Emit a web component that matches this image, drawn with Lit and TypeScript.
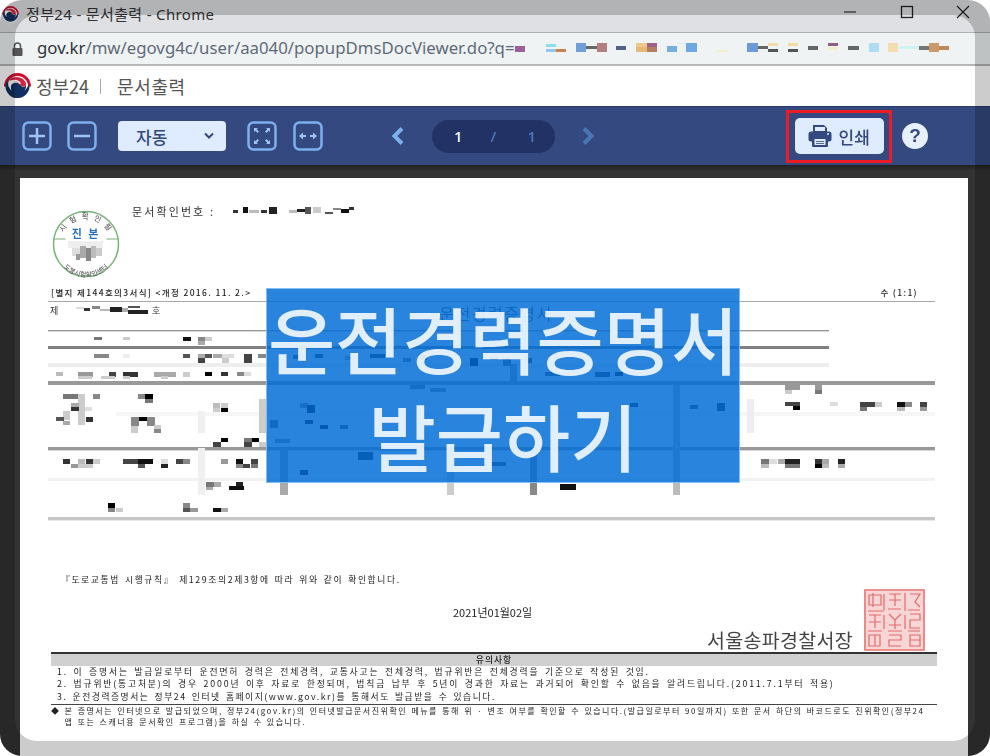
import { LitElement, html, css, svg } from "lit";
import { customElement } from "lit/decorators.js";

type R = [number, number, number, number, string];

const chips: R[] = [
  [515,46,10,6,"#9c5f9c"],[546,44,10,3,"#8edcf0"],[546,49,10,3,"#8cc8f0"],[556,49,10,3,"#c8824a"],
  [576,43,10,9,"#6e9fd8"],[586,46,11,3,"#666"],[597,43,10,9,"#b57f7f"],[616,46,10,4,"#55608a"],
  [636,43,11,4,"#edc98a"],[636,47,11,5,"#e8b878"],[647,43,10,4,"#a0608a"],[647,47,10,5,"#b08060"],
  [667,46,10,6,"#78aee0"],[677,43,10,1,"#cdf3f2"],[686,43,11,9,"#6ea8e0"],[717,50,10,2,"#f5f0c0"],
  [747,43,11,9,"#6e9ad6"],[758,46,10,3,"#666"],[768,43,10,3,"#f0dca8"],[768,49,10,3,"#555"],
  [788,43,10,3,"#f0dca0"],[788,49,10,3,"#555"],[808,46,10,4,"#666"],[828,43,10,3,"#905f85"],
  [828,47,10,3,"#f3f0c8"],[848,46,11,4,"#666"],[869,43,10,9,"#aedcf5"],[888,43,10,9,"#f2ddb0"],
  [899,46,20,3,"#cdf3f2"],[919,46,10,4,"#777"],[929,43,10,9,"#c99a6c"],[939,46,10,4,"#c08858"],
];

const lines: R[] = [
  [48,301,887,1,"#a8a8a8"],[48,330,781,1.4,"#999"],[48,346,781,3,"#808080"],[48,363,781,4,"#eee"],
  [48,381,887,4,"#999"],[48,447,887,3.4,"#999"],[48,478,887,3,"#f2f2f2"],[48,517,887,3.4,"#c6c6c6"],
  [116,412,819,4,"#f6f6f6"],
  [198,411,7,22,"#f0f0f0"],[198,448,7,47,"#f0f0f0"],[747,399,7,34,"#eee"],
  [280,448,8,47,"#aaa"],[447,448,7,47,"#ccc"],[530,448,7,47,"#888"],[673,385,7,110,"#bbb"],
  [259,399,7,34,"#ccc"],[510,364,7,21,"#999"],
];

const mosaic: R[] = [
  [94,354,15,4,"#888"],[123,354,7,4,"#eee"],[183,354,7,4,"#555"],[198,354,7,4,"#aaa"],[205,354,7,4,"#555"],
  [213,354,10,4,"#aaa"],[222,354,12,4,"#ddd"],[244,354,8,9,"#444"],[258,354,8,4,"#888"],[198,358,7,5,"#444"],
  [222,358,7,5,"#ccc"],
  [94,337,8,3,"#777"],[123,337,7,3,"#ccc"],[183,337,8,4,"#111"],[198,337,7,4,"#888"],[205,337,7,4,"#ccc"],[198,341,7,4,"#aaa"],
  [56,372,7,4,"#bbb"],[78,372,15,5,"#999"],[109,372,7,5,"#444"],[123,372,15,5,"#333"],[154,372,22,5,"#aaa"],
  [183,372,7,5,"#ccc"],[205,372,7,4,"#000"],[221,372,7,4,"#333"],[237,372,7,4,"#888"],[244,372,7,4,"#ddd"],
  [78,376,14,3,"#ccc"],[101,376,14,3,"#ccc"],[123,376,7,3,"#ccc"],[161,376,7,3,"#ccc"],
  [63,394,15,5,"#777"],[78,394,7,31,"#ccc"],[93,394,7,5,"#888"],[138,394,7,5,"#888"],[145,394,8,5,"#000"],
  [145,399,8,4,"#777"],[71,403,8,4,"#aaa"],[71,407,8,4,"#333"],[85,407,7,4,"#ddd"],[63,411,7,9,"#ccc"],
  [56,417,8,4,"#555"],[86,417,7,5,"#333"],[63,421,7,4,"#aaa"],[131,417,8,9,"#888"],[139,417,8,4,"#000"],
  [147,417,8,9,"#888"],[131,426,7,7,"#ccc"],[154,425,7,4,"#ccc"],[154,429,7,4,"#888"],
  [213,403,7,5,"#bbb"],[221,403,7,5,"#ccc"],[213,408,7,4,"#ccc"],[221,408,7,4,"#000"],
  [221,438,7,4,"#000"],[213,442,8,5,"#444"],[244,438,8,5,"#777"],[252,438,7,4,"#000"],[244,442,8,5,"#444"],[259,442,7,5,"#ccc"],
  [63,459,7,5,"#333"],[71,464,7,4,"#999"],[78,459,7,5,"#bbb"],[78,464,15,4,"#ccc"],[86,459,7,5,"#333"],
  [93,459,7,5,"#ccc"],[123,459,22,5,"#444"],[138,459,15,5,"#111"],[138,464,7,4,"#555"],[161,459,7,5,"#ddd"],
  [161,464,7,4,"#222"],[176,459,7,5,"#444"],[183,459,7,5,"#888"],[221,459,7,5,"#999"],[236,459,7,5,"#111"],
  [236,464,7,4,"#888"],[243,464,7,4,"#444"],[251,459,7,5,"#444"],[251,464,7,4,"#777"],
  [206,482,8,5,"#777"],[214,482,7,5,"#aaa"],[206,487,7,3,"#aaa"],[229,486,15,4,"#111"],[236,482,7,4,"#222"],
  [108,503,7,5,"#000"],[108,508,7,4,"#888"],[116,508,7,4,"#ccc"],[183,503,7,5,"#888"],[183,508,7,4,"#555"],
  [190,508,8,4,"#999"],[213,508,8,4,"#111"],[221,508,7,4,"#aaa"],
  [293,355,8,4,"#555"],[315,354,8,4,"#333"],[345,356,8,4,"#999"],[370,354,15,4,"#333"],[403,358,8,4,"#777"],
  [420,355,7,5,"#222"],[470,358,8,8,"#000"],[490,356,8,4,"#333"],[503,358,8,8,"#666"],[525,358,7,5,"#333"],
  [550,354,8,4,"#aaa"],[545,372,15,4,"#555"],[595,372,15,5,"#333"],[615,372,8,4,"#000"],[410,385,15,4,"#777"],
  [430,388,16,4,"#888"],[300,403,8,5,"#888"],[307,405,8,8,"#000"],[630,403,8,4,"#222"],[690,405,8,4,"#444"],
  [717,403,8,8,"#222"],[270,420,8,8,"#666"],[305,420,8,4,"#000"],[320,425,8,4,"#000"],[340,425,8,4,"#555"],
  [275,439,15,4,"#888"],[358,452,15,8,"#222"],[490,462,16,4,"#444"],[300,470,8,5,"#000"],[560,484,16,6,"#111"],
  [785,385,15,5,"#999"],[785,390,7,4,"#ccc"],[815,385,7,5,"#999"],[815,390,7,4,"#777"],
  [785,402,15,4,"#444"],[793,406,7,4,"#000"],[830,402,8,4,"#ddd"],[860,402,15,5,"#444"],[860,407,7,4,"#777"],
  [875,402,7,5,"#ccc"],[897,402,8,5,"#111"],[905,402,7,5,"#888"],[897,407,8,4,"#bbb"],[920,402,7,5,"#444"],[920,407,7,4,"#999"],
  [761,459,8,5,"#777"],[769,459,8,5,"#ddd"],[778,459,7,5,"#aaa"],[785,459,15,5,"#222"],[785,464,15,4,"#777"],
  [761,464,8,4,"#bbb"],[815,459,7,5,"#333"],[815,464,7,4,"#000"],[822,459,7,5,"#aaa"],[822,464,7,4,"#bbb"],
  [838,459,7,5,"#222"],[838,464,7,4,"#aaa"],
];

const caseNo: R[] = [[76,307,8,2,"#ddd"],[84,308,6,3,"#333"],[92,306,8,3,"#888"],[100,309,10,2,"#bbb"],[110,307,12,5,"#222"],[122,308,6,4,"#aaa"],[128,306,12,2,"#555"],[128,310,20,4,"#222"]];

const docNo: R[] = [[0,3,5,3,"#333"],[10,0,5,6,"#111"],[16,3,10,3,"#bbb"],[28,3,6,3,"#333"],[36,0,8,7,"#222"],[56,3,8,3,"#bbb"],[64,2,8,3,"#222"],[72,0,6,7,"#555"],[80,0,8,6,"#ccc"],[92,5,8,2,"#555"],[100,1,8,2,"#888"],[108,2,8,4,"#111"],[116,0,5,3,"#333"]];

const stampPix: R[] = [[16,31,35,7,"#eee"],[20,38,8,8,"#ddd"],[28,36,6,12,"#aaa"],[34,38,5,13,"#888"],[39,36,5,12,"#bbb"],[44,38,6,8,"#ccc"],[24,44,4,6,"#999"]];

const rects = (list: R[]) => list.map(([x, y, w, h, c]) => svg`<rect x=${x} y=${y} width=${w} height=${h} fill=${c}></rect>`);

const emblem = (s: number) => html`<svg width=${s} height=${s} viewBox="0 0 28 28">
  <circle cx="14" cy="14" r="13.500" fill="#fff"></circle>
  <path d="M1.500 14A12.500 12.500 0 0 1 26.500 14" fill="none" stroke="#c8102e" stroke-width="3"></path>
  <path d="M26.500 13A12.500 12.500 0 0 1 1.500 14C1.500 11 3 9 5 7.500 3.500 12 5 15 5.500 15 7 21 21 24 25 13Z" fill="#12305f"></path>
  <path d="M7.500 12.500C10 9 14.500 9 16.500 12c2 3 5 3.500 6.500 .5C23 18 19 23.500 14 23.500 9.500 23.500 6 18.500 7.500 12.500Z" fill="#12305f"></path>
  <path d="M5 7.500C9 3.500 16 3 20.500 7c1.500 1.500 2.500 3.500 2.500 5.500C21 15 18.500 14.500 16.500 12 14 8.500 9 8 5 7.500Z" fill="#c8102e" opacity="0.9"></path>
  <path d="M7.500 8.500C11 7 15 8 17 11" fill="none" stroke="#fff" stroke-width="1.500"></path>
</svg>`;

@customElement("app-root")
export class AppRoot extends LitElement {
  static styles = css`
    :host { display: block; position: relative; width: 990px; height: 756px; overflow: hidden; border-radius: 22px; font-family: "Noto Sans CJK KR", "Noto Sans", sans-serif; background: #fff; }
    svg { display: block; flex: none; }
    .win { display: flex; flex-direction: column; height: 756px; filter: blur(0.45px); }
    .title { height: 32px; background: #dfe0e3; display: flex; align-items: center; padding: 0 20px 4px 2px; color: #333; font-size: 15px; gap: 7px; box-sizing: border-box; overflow: hidden; }
    .title span { white-space: pre; letter-spacing: 0.35px; line-height: 20px; margin-top: -1px; font-family: "Noto Sans", "Noto Sans CJK KR", sans-serif; }
    .ctl { display: flex; gap: 42.500px; margin-left: auto; align-items: center; margin-top: -4px; }
    .addr { height: 34px; box-sizing: border-box; background: #eff3f4; border-top: 1px solid #aeb0b2; border-bottom: 2px solid #b4b6b8; display: flex; align-items: center; padding-left: 12px; gap: 14px; position: relative; }
    .url { font-family: "Noto Sans", sans-serif; font-size: 16.800px; color: #5f6a78; white-space: nowrap; line-height: 20px; padding-bottom: 1px; }
    .url b { font-weight: 400; color: #30343a; }
    .chips { position: absolute; left: 0; top: -33px; }
    .head { height: 40px; background: #fff; display: flex; align-items: center; padding-left: 4px; color: #555; font-size: 18px; box-sizing: border-box; }
    .head .org { margin-left: 5px; }
    .head .sep { width: 1px; height: 15px; background: #aaa; margin: 0 16px 0 11px; }
    .head .sub { letter-spacing: 0.6px; }
    .bar { height: 59px; background: #34497f; border-top: 1px solid #28396a; box-sizing: border-box; display: flex; align-items: center; padding-left: 22px; }
    .ic { margin-right: 15px; }
    .ic2 { margin-right: 16px; }
    .sel { width: 108px; height: 30px; background: #dfecff; border-radius: 4px; margin: 0 21px 0 6px; display: flex; align-items: center; justify-content: space-between; padding: 0 11px 0 18px; box-sizing: border-box; color: #34497f; font-size: 17px; font-weight: 500; }
    .prev { margin: 0 27px 0 67px; }
    .pill { width: 123px; height: 33px; border-radius: 17px; background: #233265; display: flex; align-items: center; font-family: "Noto Sans", sans-serif; font-size: 15px; font-weight: 500; padding-left: 22px; box-sizing: border-box; color: #fff; }
    .pill i { font-style: normal; color: #4a7cc0; }
    .pill .sl { margin-left: 28px; }
    .pill .tot { margin-left: 31px; }
    .next { margin: 0 190px 0 26px; }
    .redbox { width: 106px; height: 53px; border: 3px solid #ed1c24; box-sizing: border-box; display: flex; align-items: center; justify-content: center; margin-right: 10px; }
    .print { width: 89px; height: 36px; background: #dfecff; border-radius: 5px; display: flex; align-items: center; gap: 7px; padding-left: 13px; box-sizing: border-box; color: #34497f; font-size: 17px; font-weight: 500; }
    .help { width: 26px; height: 26px; border-radius: 50%; background: #e6f0ff; color: #34497f; font-family: "Liberation Sans", sans-serif; font-weight: 700; font-size: 19px; display: flex; align-items: center; justify-content: center; }
    .view { flex: 1; min-height: 0; background: linear-gradient(#222, #333 6px); padding: 13px 22px 0 20px; }
    .page { height: 600px; background: #fff; padding: 0 32px 0 28px; box-sizing: border-box; color: #222; overflow: hidden; }
    .toprow { height: 105px; display: flex; padding-left: 4px; gap: 12px; box-sizing: border-box; padding-top: 32px; }
    .docno { display: flex; align-items: center; gap: 18px; height: 12px; margin-top: -5px; font-size: 11px; letter-spacing: 2.100px; color: #333; }
    .formhead { height: 17px; display: flex; justify-content: space-between; align-items: flex-end; font-size: 8.500px; padding: 0 18px 2px 3px; box-sizing: border-box; letter-spacing: 1.370px; line-height: 12px; font-weight: 500; }
    .conf { margin-top: 51px; height: 14px; line-height: 14px; padding-left: 13px; font-size: 8.800px; letter-spacing: 1.600px; word-spacing: 1.500px; white-space: nowrap; }
    .sign { height: 65px; display: flex; padding-left: 405px; }
    .date { margin-top: 18px; font-size: 11px; line-height: 14px; height: 14px; }
    .name { margin-left: auto; align-self: flex-end; font-size: 19.500px; color: #444; line-height: 24px; letter-spacing: 0.3px; }
    .seal { margin: 2px 11px 0 11px; }
    .notice { margin: 0 -1px 0 3px; border-top: 2px solid #333; font-size: 8.800px; color: #222; white-space: nowrap; }
    .band { height: 12px; line-height: 12px; background: #d0d0d0; text-align: center; font-weight: 500; letter-spacing: 1px; }
    .items { padding: 0 0 1px 6px; line-height: 12.300px; letter-spacing: 1.830px; word-spacing: 1.800px; border-bottom: 1px solid #444; }
    .l3 { letter-spacing: 1.500px; }
    .foot { display: flex; gap: 4px; font-size: 8px; line-height: 11px; letter-spacing: 1.490px; word-spacing: 1px; }
    .scan { position: absolute; left: 266px; top: 288px; width: 474px; height: 195px; box-sizing: border-box; border: 1px solid rgba(140, 195, 250, 0.9); background: rgba(0, 108, 216, 0.84); display: flex; flex-direction: column; align-items: center; justify-content: center; color: rgba(255, 255, 255, 0.86); font-size: 73px; font-weight: 500; line-height: 97px; white-space: nowrap; filter: blur(0.4px); }
    .frame { position: absolute; left: 15px; top: 15px; width: 960px; height: 726px; border-radius: 22px; box-shadow: 0 0 0 60px rgba(0, 0, 0, 0.2); }
  `;

  render() {
    return html`
      <div class="win">
        <div class="title">
          ${emblem(17)}
          <span>정부24 - 문서출력 - Chrome</span>
          <div class="ctl">
            <svg width="14" height="14" viewBox="0 0 14 14"><path d="M1 7h12" stroke="#333" stroke-width="1.2"></path></svg>
            <svg width="14" height="14" viewBox="0 0 14 14"><rect x="1.500" y="1.500" width="11" height="11" fill="none" stroke="#222" stroke-width="1.300"></rect></svg>
            <svg width="14" height="14" viewBox="0 0 14 14"><path d="M1 1l12 12M13 1L1 13" stroke="#222" stroke-width="1.200"></path></svg>
          </div>
        </div>
        <div class="addr">
          <svg width="11" height="14" viewBox="0 0 11 14"><path d="M2.500 6V4a3 3 0 0 1 6 0v2" fill="none" stroke="#555" stroke-width="1.500"></path><rect x="0.500" y="6" width="10" height="8" rx="1" fill="#555"></rect></svg>
          <div class="url"><b>gov.kr</b>/mw/egovg4c/user/aa040/popupDmsDocViewer.do?q=</div>
          <svg class="chips" width="990" height="66" viewBox="0 0 990 66">${rects(chips)}</svg>
        </div>
        <div class="head">
          ${emblem(27)}
          <span class="org">정부24</span><span class="sep"></span><span class="sub">문서출력</span>
        </div>
        <div class="bar">
          <svg class="ic" width="30" height="30" viewBox="0 0 30 30"><rect x="1.500" y="1.500" width="27" height="27" rx="5" fill="none" stroke="#7db0ee" stroke-width="2.500"></rect><path d="M7 15h16M15 7v16" stroke="#9cc4f4" stroke-width="2.500"></path></svg>
          <svg class="ic" width="30" height="30" viewBox="0 0 30 30"><rect x="1.500" y="1.500" width="27" height="27" rx="5" fill="none" stroke="#7db0ee" stroke-width="2.500"></rect><path d="M7 15h16" stroke="#9cc4f4" stroke-width="2.500"></path></svg>
          <div class="sel"><span>자동</span>
            <svg width="12" height="8" viewBox="0 0 12 8"><path d="M2 1.500l4 4 4-4" fill="none" stroke="#34497f" stroke-width="2"></path></svg>
          </div>
          <svg class="ic2" width="30" height="30" viewBox="0 0 30 30"><rect x="1.500" y="1.500" width="27" height="27" rx="5" fill="none" stroke="#7db0ee" stroke-width="2.500"></rect><path d="M7 11V7h4l-1.300 1.300 2.200 2.200-1.400 1.400-2.200-2.200ZM23 11V7h-4l1.300 1.300-2.200 2.200 1.400 1.400 2.200-2.200ZM7 19v4h4l-1.300-1.300 2.200-2.200-1.400-1.400-2.200 2.200ZM23 19v4h-4l1.300-1.300-2.200-2.200 1.400-1.400 2.200 2.200Z" fill="#9cc4f4"></path></svg>
          <svg width="30" height="30" viewBox="0 0 30 30"><rect x="1.500" y="1.500" width="27" height="27" rx="5" fill="none" stroke="#7db0ee" stroke-width="2.500"></rect><path d="M6 15l4-3.500v2.500h3v2h-3v2.500ZM24 15l-4-3.500v2.500h-3v2h3v2.500Z" fill="#9cc4f4"></path></svg>
          <svg class="prev" width="15" height="20" viewBox="0 0 15 20"><path d="M12 2.500L4.500 10l7.500 7.500" fill="none" stroke="#7db0ee" stroke-width="4"></path></svg>
          <div class="pill"><span>1</span><i class="sl">/</i><i class="tot">1</i></div>
          <svg class="next" width="15" height="20" viewBox="0 0 15 20"><path d="M3 2.500L10.500 10 3 17.500" fill="none" stroke="#4a76b8" stroke-width="4"></path></svg>
          <div class="redbox">
            <div class="print">
              <svg width="24" height="24" viewBox="0 0 24 24"><path d="M5 1h11l3 3v4H5Z" fill="#34497f"></path><rect x="7" y="3" width="10" height="4" fill="#dfecff"></rect><rect x="0.500" y="7.500" width="23" height="10" rx="2.500" fill="#34497f"></rect><rect x="4" y="13" width="16" height="10" rx="1" fill="#34497f"></rect><rect x="6.500" y="15" width="11" height="6" fill="#dfecff"></rect><path d="M8 17.500h8M8 19.500h8" stroke="#34497f" stroke-width="0.800"></path><circle cx="20" cy="10" r="1" fill="#dfecff"></circle></svg>
              <span>인쇄</span>
            </div>
          </div>
          <div class="help">?</div>
        </div>
        <div class="view">
          <div class="page">
            <div class="toprow">
              <svg width="68" height="68" viewBox="0 0 68 68">
                <defs>
                  <path id="ta" d="M9 34A25 25 0 0 1 59 34"></path>
                  <path id="tb" d="M3 36A31 31 0 0 0 65 36"></path>
                </defs>
                <circle cx="34" cy="34" r="32.500" fill="#fff" stroke="#7ab27a" stroke-width="1.500"></circle>
                <path d="M1.500 29h12M54.500 29h12" stroke="#7ab27a" stroke-width="1"></path>
                <text font-size="7.500" fill="#444" letter-spacing="1.500"><textPath href="#ta" startOffset="50%" text-anchor="middle">시 험 확 인 필</textPath></text>
                <text font-size="6.800" fill="#444"><textPath href="#tb" startOffset="50%" text-anchor="middle">도봉시험확인센터</textPath></text>
                <text x="34" y="28" font-size="11" font-weight="700" fill="#2a6fc0" text-anchor="middle" letter-spacing="2">진 본</text>
                ${rects(stampPix)}
              </svg>
              <div class="docno">
                <span>문서확인번호 :</span>
                <svg width="125" height="8" viewBox="0 0 125 8">${rects(docNo)}</svg>
              </div>
            </div>
            <div class="formhead"><span>[별지 제144호의3서식] &lt;개정 2016. 11. 2.&gt;</span><span>수 (1:1)</span></div>
            <svg width="887" height="222" viewBox="48 300 887 222">
              <text x="50" y="314" font-size="9" fill="#333">제</text>
              <text x="152" y="314" font-size="9" fill="#333">호</text>
              <text x="496" y="320" font-size="16" fill="#555" text-anchor="middle" letter-spacing="1.500">운전경력증명서</text>
              ${rects(caseNo)}${rects(lines)}${rects(mosaic)}
            </svg>
            <div class="conf">『도로교통법 시행규칙』 제129조의2제3항에 따라 위와 같이 확인합니다.</div>
            <div class="sign">
              <div class="date">2021년01월02일</div>
              <div class="name">서울송파경찰서장</div>
              <svg class="seal" width="61" height="62" viewBox="0 0 61 62">
                <rect width="61" height="62" fill="#f8d6d6"></rect>
                <path d="M1 1h59v60H1Z" fill="none" stroke="#e87878" stroke-width="1.600"></path>
                <path d="M5 6h12v10H5ZM9 4v14M25 5h12M31 5v12M25 11h12M46 5h10l-5 8 5 5M5 26h12M11 26v13M5 33h12M25 25l6 6 6-6M31 31v9M25 36h12M46 25h10v6H46v8h10M5 46h11v11H5ZM11 46v11M25 46h12v5H25v6h12M46 46h10v11H46ZM46 51h10M20 5v16M41 4v18M20 26v14M41 26v14M4 22h16M24 20h13M44 21h12M4 42h14M24 42h14M44 42h12" fill="none" stroke="#e46a6a" stroke-width="1.200"></path>
              </svg>
            </div>
            <div class="notice">
              <div class="band">유의사항</div>
              <div class="items">
                <div>1. 이 증명서는 발급일로부터 운전면허 경력은 전체경력, 교통사고는 전체경력, 법규위반은 전체경력을 기준으로 작성된 것임.</div>
                <div>2. 법규위반(통고처분)의 경우 2000년 이후 자료로 한정되며, 범칙금 납부 후 5년이 경과한 자료는 과거되어 확인할 수 없음을 알려드립니다.(2011.7.1부터 적용)</div>
                <div class="l3">3. 운전경력증명서는 정부24 인터넷 홈페이지(www.gov.kr)를 통해서도 발급받을 수 있습니다.</div>
              </div>
              <div class="foot"><span>◆</span><div>본 증명서는 인터넷으로 발급되었으며, 정부24(gov.kr)의 인터넷발급문서진위확인 메뉴를 통해 위 · 변조 여부를 확인할 수 있습니다.(발급일로부터 90일까지) 또한 문서 하단의 바코드로도 진위확인(정부24<br />앱 또는 스캐너용 문서확인 프로그램)을 하실 수 있습니다.</div></div>
            </div>
          </div>
        </div>
      </div>
      <div class="scan"><div>운전경력증명서</div><div>발급하기</div></div>
      <div class="frame"></div>
    `;
  }
}
